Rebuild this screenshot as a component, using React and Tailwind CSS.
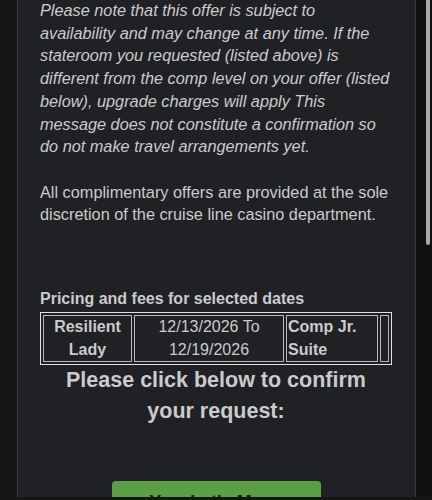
import React from 'react';

const font = { fontFamily: '"Liberation Sans", Arial, sans-serif' };

const noteLines = [
  'Please note that this offer is subject to',
  'availability and may change at any time. If the',
  'stateroom you requested (listed above) is',
  'different from the comp level on your offer (listed',
  'below), upgrade charges will apply This',
  'message does not constitute a confirmation so',
  'do not make travel arrangements yet.',
];

const App = () => {
  return (
    <div className="relative w-[432px] h-[500px] overflow-hidden bg-[#151515]" style={font}>
      <div className="ml-[17px] w-[399px] min-h-[500px] border-x border-[#3a3b3e] bg-[#202125] pl-[22px] pr-[23px] text-[#cbcbcb]">
        <p className="-mt-[1px] text-[16.3px] leading-[22.7px] italic whitespace-nowrap">
          {noteLines.map((line, i) => (
            <React.Fragment key={i}>
              {line}
              {i < noteLines.length - 1 && <br />}
            </React.Fragment>
          ))}
        </p>
        <p className="mt-[22.7px] text-[16.3px] leading-[22.7px] whitespace-nowrap">
          All complimentary offers are provided at the sole
          <br />
          discretion of the cruise line casino department.
        </p>

        <h3 className="mt-[64px] text-[16px] leading-[18px] font-bold">Pricing and fees for selected dates</h3>
        <table className="mt-[4px] w-[352px] border-separate border-spacing-[2px] border border-[#e2e2e2] text-[16px] leading-[22.5px]">
          <tbody>
            <tr>
              <td className="w-[89px] p-0 border border-[#b8b8b8] text-center font-bold">Resilient Lady</td>
              <td className="w-[150px] p-0 border border-[#b8b8b8] text-center">
                12/13/2026 To
                <br />
                12/19/2026
              </td>
              <td className="w-[92px] p-0 pl-[1px] border border-[#b8b8b8] text-left font-bold">Comp Jr. Suite</td>
              <td className="w-[9px] p-0 border border-[#b8b8b8]"></td>
            </tr>
          </tbody>
        </table>

        <p className="text-center text-[21.5px] leading-[31px] font-bold">
          Please click below to confirm
          <br />
          your request:
        </p>

        <div className="mt-[54px] flex justify-center">
          <button className="w-[209px] h-[44px] rounded-[4px] bg-[#5a9f46] pt-[10px] text-[18px] leading-[22px] font-bold text-[#1c1c1c] flex justify-center">
            Yes, Let's Move Forward!
          </button>
        </div>
      </div>

      {/* scrollbar */}
      <div className="absolute top-0 left-[416px] w-[16px] h-[500px] bg-[#111111]"></div>
      <div className="absolute top-0 left-[426px] w-[4px] h-[245px] rounded-b-full bg-[#a9a9a9]"></div>
      <div className="absolute bottom-0 left-0 w-[432px] h-[3px] bg-[#161616]"></div>
    </div>
  );
};

export default App;
